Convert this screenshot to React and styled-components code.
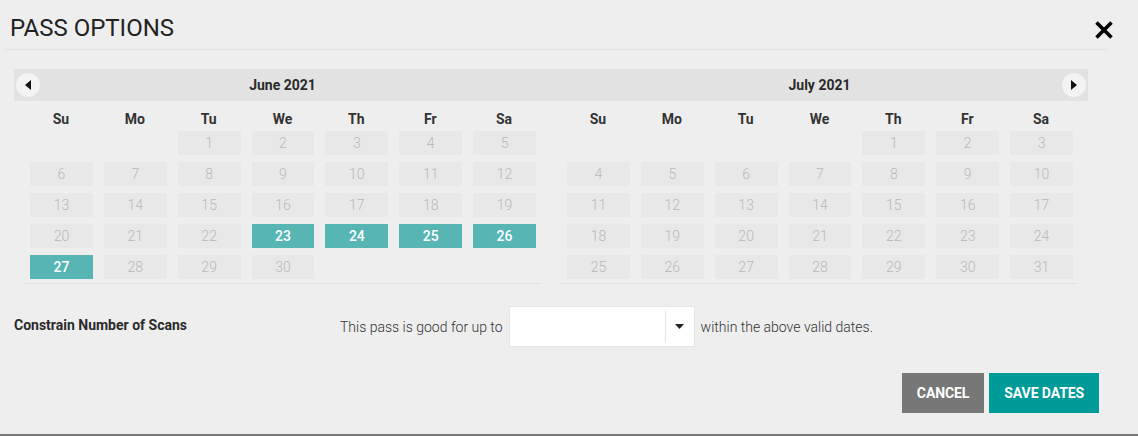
import React from "react";
import styled, { createGlobalStyle } from "styled-components";

const GlobalStyle = createGlobalStyle`
  html, body {
    margin: 0;
    padding: 0;
    background: #777777;
  }
  body {
    font-family: Roboto, "Liberation Sans", Arial, sans-serif;
    color: #333;
  }
`;

const Modal = styled.div`
  position: relative;
  width: 1138px;
  height: 434px;
  background: #eeeeee;
  box-sizing: border-box;
`;

const Header = styled.div`
  box-sizing: border-box;
  height: 50px;
  margin-left: 4px;
  width: 1104px;
  padding: 14px 0 0 6px;
  border-bottom: 1px solid #e3e3e3;
`;

const Title = styled.h1`
  margin: 0;
  font-size: 24px;
  line-height: 28px;
  font-weight: 400;
  color: #222;
`;

const CloseButton = styled.button`
  position: absolute;
  top: 19px;
  right: 23px;
  width: 22px;
  height: 22px;
  padding: 0;
  border: 0;
  background: transparent;
  display: flex;
  align-items: center;
  justify-content: center;
`;

const Calendars = styled.div`
  display: flex;
  margin: 19px 0 0 14px;
  width: 1074px;
`;

const Month = styled.div`
  flex: 1;
`;

const MonthBar = styled.div`
  position: relative;
  height: 32px;
  background: #e2e2e2;
  display: flex;
  align-items: center;
  justify-content: center;
  font-size: 14px;
  font-weight: 700;
  color: #2a2a2a;
`;

const NavButton = styled.button`
  position: absolute;
  top: 4px;
  ${(p) => (p.side === "left" ? "left: 2px;" : "right: 2px;")}
  width: 24px;
  height: 24px;
  padding: 0;
  border: 0;
  border-radius: 50%;
  background: #f3f3f3;
  display: flex;
  align-items: center;
  justify-content: center;
`;

const Grid = styled.div`
  margin: 0 10px;
  display: grid;
  grid-template-columns: repeat(7, 1fr);
  border-bottom: 1px solid #e2e2e2;
`;

const DayName = styled.div`
  height: 27px;
  padding-top: 9px;
  box-sizing: border-box;
  line-height: 18px;
  text-align: center;
  font-size: 14px;
  font-weight: 700;
  color: #333;
`;

const Day = styled.div`
  height: 24px;
  margin: 3px 5px 4px 6px;
  line-height: 24px;
  text-align: center;
  font-size: 14px;
  font-weight: ${(p) => (p.selected ? 500 : 300)};
  color: ${(p) => (p.selected ? "#ffffff" : "#b8b8b8")};
  background: ${(p) =>
    p.selected ? "#57b5b3" : p.empty ? "transparent" : "#e8e8e8"};
`;

const ScanRow = styled.div`
  display: flex;
  align-items: center;
  margin-top: 22px;
  padding-left: 14px;
`;

const ScanLabel = styled.div`
  width: 326px;
  font-size: 14px;
  font-weight: 700;
  color: #2a2a2a;
  margin-bottom: 4px;
`;

const ScanText = styled.span`
  font-size: 14px;
  font-weight: 300;
  color: #333;
`;

const Select = styled.div`
  box-sizing: border-box;
  width: 186px;
  height: 41px;
  margin: 0 6px;
  background: #fff;
  border: 1px solid #e6e6e6;
  display: flex;
  justify-content: flex-end;
  align-items: stretch;
`;

const SelectArrow = styled.div`
  width: 28px;
  margin: 3px 0;
  border-left: 1px solid #e6e6e6;
  display: flex;
  align-items: center;
  justify-content: center;
`;

const Actions = styled.div`
  display: flex;
  justify-content: flex-end;
  gap: 5px;
  margin: 26px 39px 0 0;
`;

const Button = styled.button`
  height: 40px;
  padding: 0 15px;
  border: 0;
  font-family: Roboto, "Liberation Sans", Arial, sans-serif;
  font-size: 14px;
  font-weight: 700;
  color: #fff;
  letter-spacing: -0.1px;
  background: ${(p) => (p.primary ? "#009b98" : "#777777")};
`;

const dayNames = ["Su", "Mo", "Tu", "We", "Th", "Fr", "Sa"];
const selectedJune = [23, 24, 25, 26, 27];

const buildDays = (offset, count) => {
  const days = [];
  for (let i = 0; i < offset; i++) days.push(null);
  for (let d = 1; d <= count; d++) days.push(d);
  return days;
};

const Triangle = ({ dir }) => {
  const points = {
    left: "6,0 6,10 0,5",
    right: "0,0 0,10 6,5",
  };
  return (
    <svg width="6" height="10" viewBox="0 0 6 10">
      <polygon points={points[dir]} fill="#111" />
    </svg>
  );
};

const MonthCalendar = ({ label, offset, count, selected, nav }) => (
  <Month>
    <MonthBar>
      {nav && (
        <NavButton side={nav}>
          <Triangle dir={nav} />
        </NavButton>
      )}
      {label}
    </MonthBar>
    <Grid>
      {dayNames.map((n) => (
        <DayName key={n}>{n}</DayName>
      ))}
      {buildDays(offset, count).map((d, i) =>
        d === null ? (
          <Day key={"e" + i} empty />
        ) : (
          <Day key={d} selected={selected.includes(d)}>
            {d}
          </Day>
        )
      )}
    </Grid>
  </Month>
);

export default function App() {
  return (
    <>
      <GlobalStyle />
      <Modal>
        <Header>
          <Title>PASS OPTIONS</Title>
        </Header>
        <CloseButton aria-label="close">
          <svg width="20" height="20" viewBox="0 0 20 20">
            <path
              d="M2.5 2.5 L17.5 17.5 M17.5 2.5 L2.5 17.5"
              stroke="#000"
              strokeWidth="3.6"
            />
          </svg>
        </CloseButton>
        <Calendars>
          <MonthCalendar
            label="June 2021"
            offset={2}
            count={30}
            selected={selectedJune}
            nav="left"
          />
          <MonthCalendar
            label="July 2021"
            offset={4}
            count={31}
            selected={[]}
            nav="right"
          />
        </Calendars>
        <ScanRow>
          <ScanLabel>Constrain Number of Scans</ScanLabel>
          <ScanText>This pass is good for up to</ScanText>
          <Select>
            <SelectArrow>
              <svg width="9" height="5" viewBox="0 0 9 5">
                <polygon points="0,0 9,0 4.5,5" fill="#222" />
              </svg>
            </SelectArrow>
          </Select>
          <ScanText>within the above valid dates.</ScanText>
        </ScanRow>
        <Actions>
          <Button>CANCEL</Button>
          <Button primary>SAVE DATES</Button>
        </Actions>
      </Modal>
    </>
  );
}
